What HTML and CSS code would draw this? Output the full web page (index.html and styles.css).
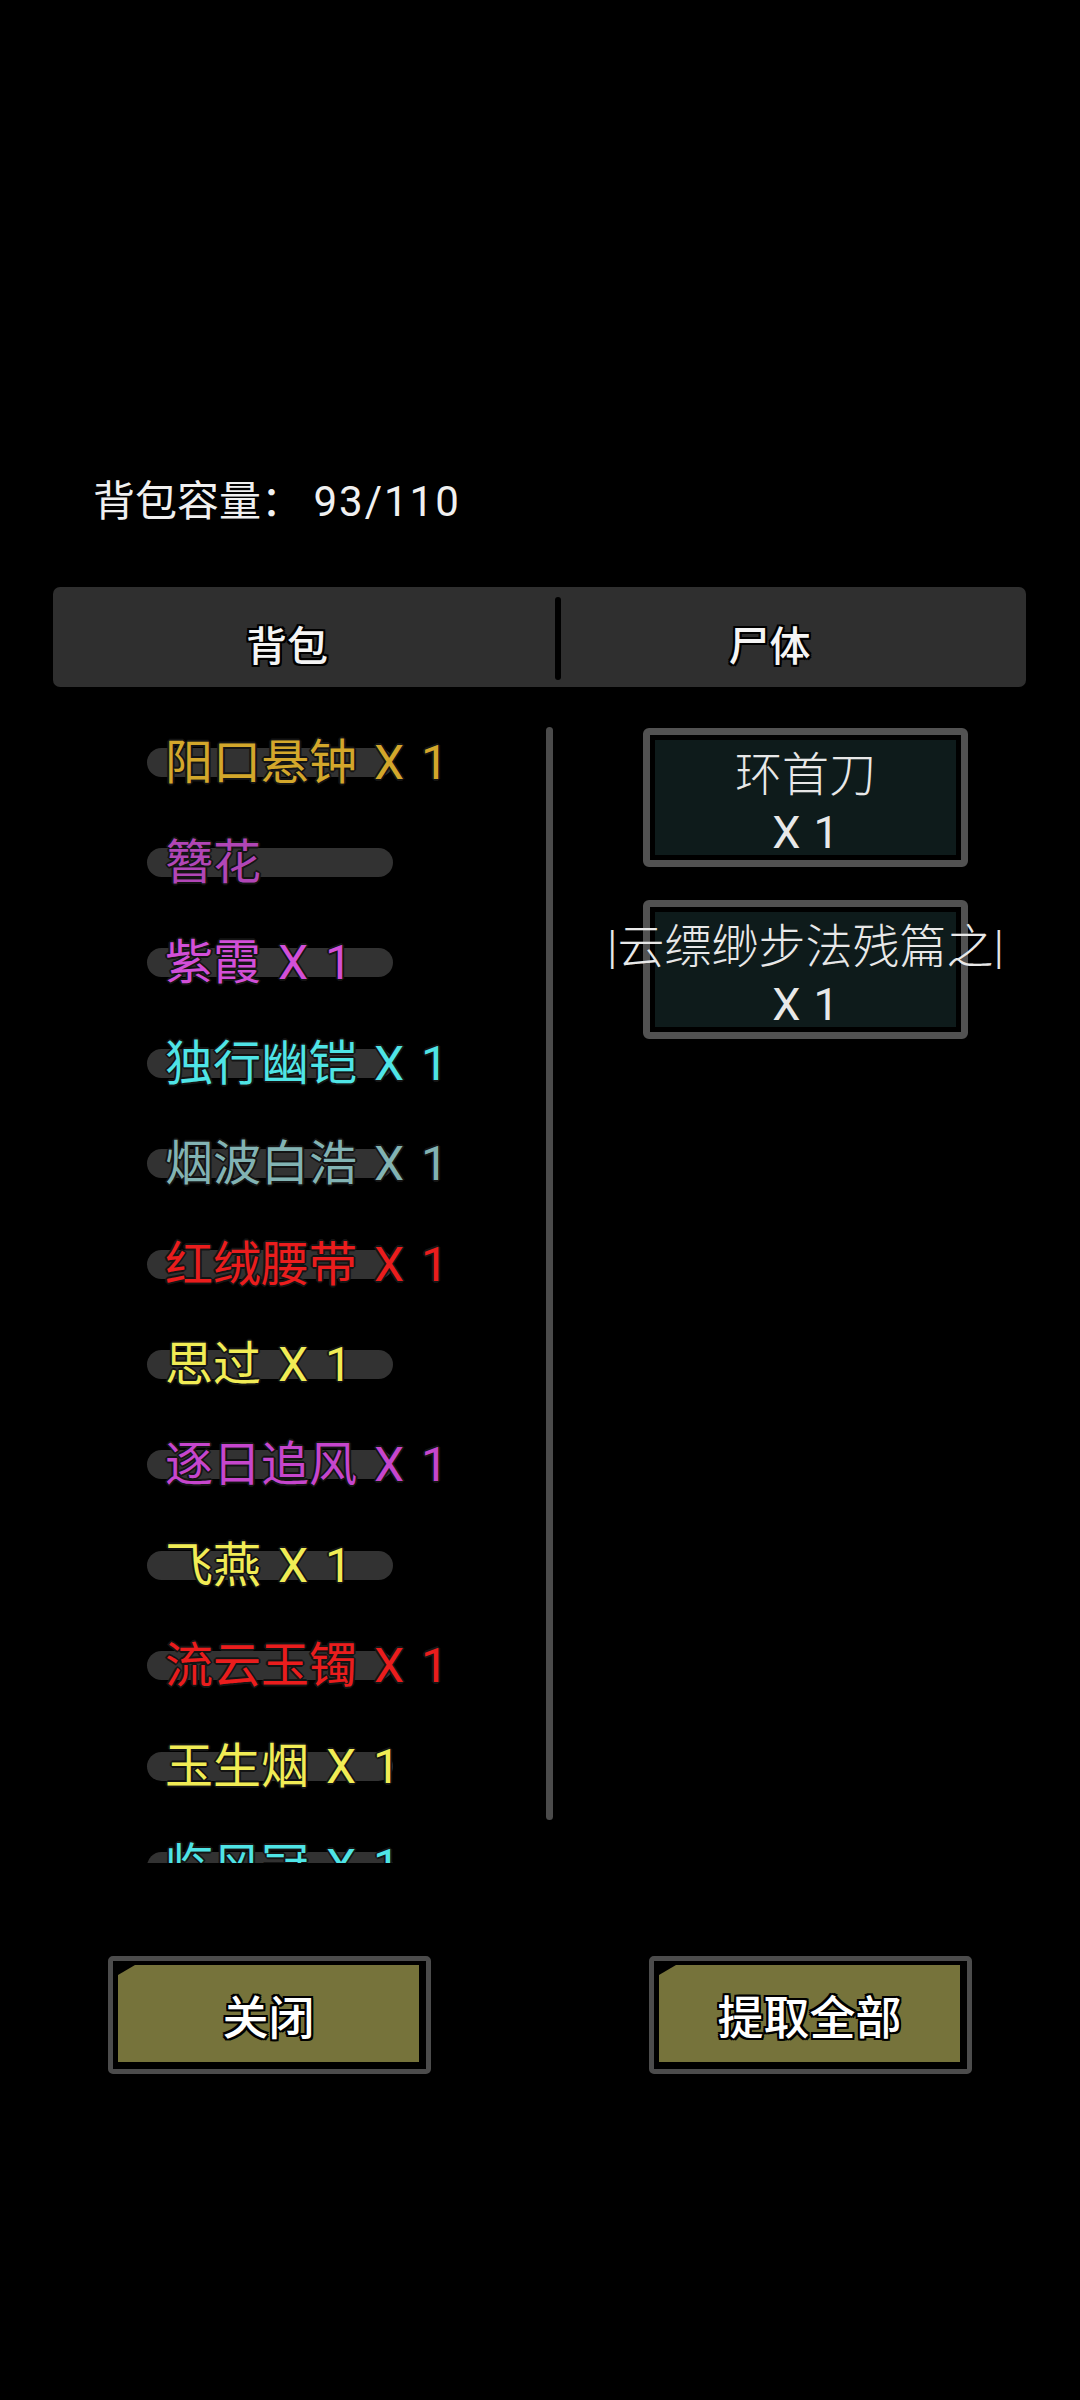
FILE: index.html
```html
<!doctype html>
<html lang="zh">
<head>
  <meta charset="utf-8">
  <title>背包</title>
  <link rel="stylesheet" href="styles.css">
</head>
<body>
  <div class="screen">
    <div class="capacity">背包容量： <span class="capacity-num">93/110</span></div>

    <div class="tabs">
      <div class="tab tab-bag">背包</div>
      <div class="tab-divider"></div>
      <div class="tab tab-corpse">尸体</div>
    </div>

    <div class="content">
      <div class="bag-list">
        <div class="item"><span class="item-name gold">阳口悬钟 X 1</span></div>
        <div class="item"><span class="item-name violet">簪花</span></div>
        <div class="item"><span class="item-name magenta">紫霞 X 1</span></div>
        <div class="item"><span class="item-name cyan">独行幽铠 X 1</span></div>
        <div class="item"><span class="item-name slate">烟波白浩 X 1</span></div>
        <div class="item"><span class="item-name red">红绒腰带 X 1</span></div>
        <div class="item"><span class="item-name yellow">思过 X 1</span></div>
        <div class="item"><span class="item-name purple">逐日追风 X 1</span></div>
        <div class="item"><span class="item-name yellow">飞燕 X 1</span></div>
        <div class="item"><span class="item-name red">流云玉镯 X 1</span></div>
        <div class="item"><span class="item-name yellow">玉生烟 X 1</span></div>
        <div class="item"><span class="item-name cyan">临风冠 X 1</span></div>
      </div>
      <div class="scrollbar"></div>

      <div class="corpse">
        <div class="card">
          <div class="card-inner">
            <div class="card-name">环首刀</div>
            <div class="card-count">X 1</div>
          </div>
        </div>
        <div class="card">
          <div class="card-inner">
            <div class="card-name">|云缥缈步法残篇之|</div>
            <div class="card-count">X 1</div>
          </div>
        </div>
      </div>
    </div>

    <div class="buttons">
      <div class="btn"><div class="btn-face">关闭</div></div>
      <div class="btn"><div class="btn-face">提取全部</div></div>
    </div>
  </div>
</body>
</html>
```

FILE: styles.css
```css
html, body {
	background: #000;
	margin: 0; padding: 0;
	font-family: "Roboto", "Noto Sans CJK SC", sans-serif;
	width: 1080px;
	height: 2400px;
	overflow: hidden;
}
.screen {
	width: 1080px;
	height: 2400px;
	padding-top: 477px;
	box-sizing: border-box;
}

.capacity {
	padding-left: 93px;
	height: 50px;
	line-height: 50px;
	font-size: 42px;
	color: #f0f0f0;
	text-shadow: 1px 1px 1px #000, -1px -1px 1px #000;
}
.capacity-num { letter-spacing: 2px; }

/* tab bar */
.tabs {
	margin: 60px 0 0 53px;
	width: 973px;
	height: 100px;
	background: #2f2f2f;
	border-radius: 7px;
	display: flex;
	align-items: center;
}
.tab {
	height: 100px;
	padding-top: 20px;
	line-height: 80px;
	box-sizing: border-box;
	font-size: 41px;
	font-weight: 500;
	color: #f4f4f4;
	text-align: center;
	text-shadow: 2px 0 #000, -2px 0 #000, 0 2px #000, 0 -2px #000,
		2px 2px #000, -2px -2px #000, 2px -2px #000, -2px 2px #000;
}
.tab-bag { width: 502px; padding-right: 34px; }
.tab-corpse { flex: 1; padding-right: 48px; }
.tab-divider {
	width: 6px;
	height: 83px;
	margin-top: 3px;
	background: #000;
	border-radius: 3px;
}

/* body of the dialog */
.content {
	margin-top: 25px;
	height: 1151px;
	display: flex;
}
.bag-list {
	width: 546px;
	height: 1151px;
	overflow: hidden;
	padding-left: 147px;
	box-sizing: border-box;
}
.item {
	height: 100.4px;
	display: flex;
	align-items: center;
}
.item-name {
	display: block;
	width: 246px;
	height: 29px;
	line-height: 29px;
	padding-left: 18px;
	box-sizing: border-box;
	background: #323232;
	border-radius: 15px;
	font-size: 48px;
	word-spacing: 5px;
	white-space: nowrap;
	text-shadow: 2px 0 #141414, -2px 0 #141414, 0 2px #141414, 0 -2px #141414,
		1px 1px #141414, -1px -1px #141414, 1px -1px #141414, -1px 1px #141414;
}
.gold { color: #d3a72b; }
.violet { color: #b146b6; }
.magenta { color: #d24fd8; }
.purple { color: #c646cd; }
.cyan { color: #4fe4e6; }
.slate { color: #82b3b3; }
.red { color: #ea1d1d; }
.yellow { color: #f1ec55; }

.scrollbar {
	width: 7px;
	height: 1093px;
	margin-top: 15px;
	background: #4b4b4b;
	border-radius: 4px;
}

.corpse {
	margin-left: 90px;
	padding-top: 16px;
	display: flex;
	flex-direction: column;
	gap: 33px;
}
.card {
	width: 325px;
	height: 139px;
	box-sizing: border-box;
	border: 7px solid #525252;
	border-radius: 6px;
	padding: 5px;
	background: #000;
}
.card-inner {
	height: 100%;
	background: #0e1b1b;
	display: flex;
	flex-direction: column;
	align-items: center;
	padding-top: 12px;
	box-sizing: border-box;
	gap: 12px;
}
.card-name, .card-count {
	height: 46px;
	line-height: 46px;
	font-size: 47px;
	color: #e8e8e8;
	white-space: nowrap;
}
.card-name { font-weight: 300; }
.card-count { font-size: 45px; word-spacing: 2px; }

/* bottom buttons */
.buttons {
	margin-top: 93px;
	padding-left: 108px;
	display: flex;
	gap: 218px;
}
.btn {
	width: 323px;
	height: 118px;
	box-sizing: border-box;
	border: 5px solid #4c4c4c;
	border-radius: 5px;
	background: #000;
	padding: 4px 7px 7px 5px;
}
.btn-face {
	height: 100%;
	background: #76733b;
	clip-path: polygon(17px 0, 100% 0, 100% 100%, 0 100%, 0 10px);
	display: flex;
	align-items: center;
	justify-content: center;
	font-size: 46px;
	font-weight: 500;
	color: #fff;
	text-shadow: 2px 0 #000, -2px 0 #000, 0 2px #000, 0 -2px #000,
		2px 2px #000, -2px -2px #000, 2px -2px #000, -2px 2px #000;
}
```
